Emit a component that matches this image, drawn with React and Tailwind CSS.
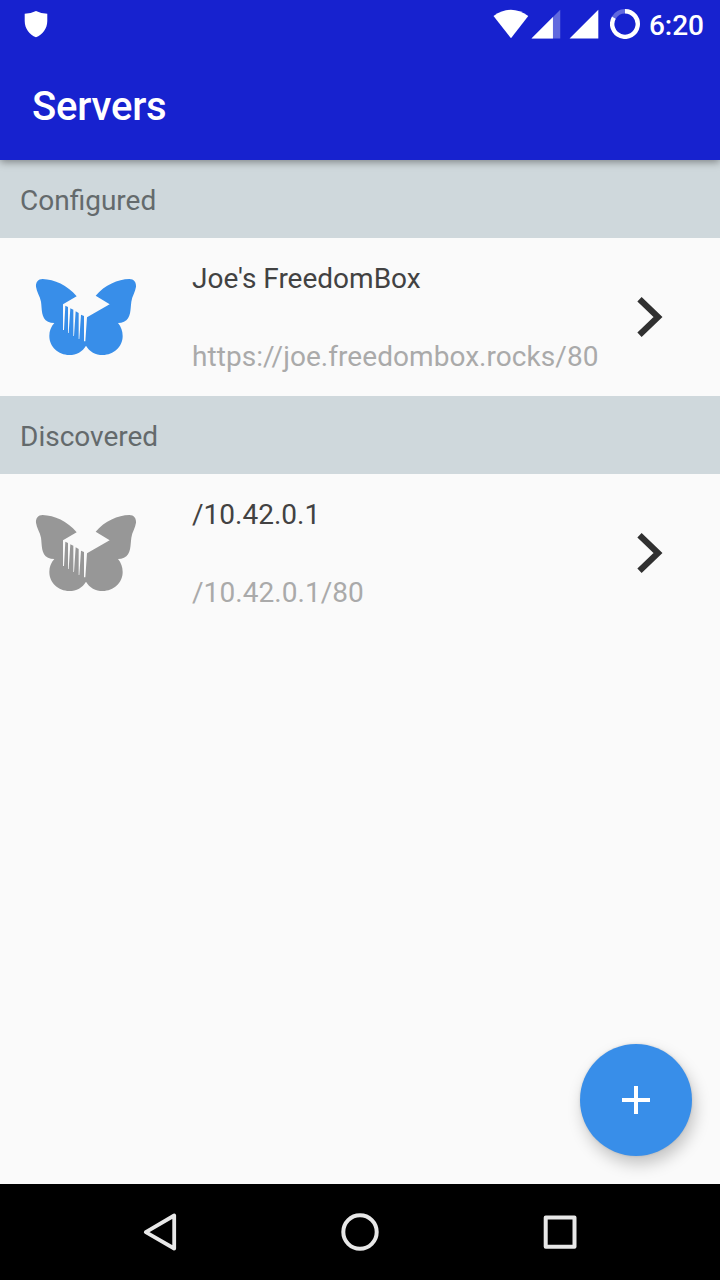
function Butterfly({ className }) {
  return (
    <svg viewBox="0 0 360 288" className={`mb-0.5 h-24 w-[120px] shrink-0 ${className}`}>
      <path
        fill="currentColor"
        d="M50 33C85 34 124 51 152 85L111 109V186L114 186L118 113L126 117V195L128 195L133 121L142 125V204L144 204L149 130L158 135V213L160 213L165 140L174 144V220L178 220L183 148L251 109L209 83C236 51 276 34 310 33C324 33 331 43 330 56C328 72 318 84 316 101C313 122 316 151 294 161Q286 165 276 165C285 176 290 189 290 204C290 236 263 261 230 261C209 261 190 251 180 233C170 251 151 261 130 261C97 261 70 236 70 204C70 189 75 176 85 165Q74 165 66 161C45 151 48 122 45 101C42 84 32 72 30 56C29 43 36 33 50 33Z"
      />
    </svg>
  );
}

function SectionHeader({ children }) {
  return (
    <h2 className="flex h-[78px] items-center bg-[#cfd8dc] pt-1 pl-5 text-[28px] leading-8 text-[#646a6c]">
      {children}
    </h2>
  );
}

function ServerRow({ name, address, iconClass }) {
  return (
    <div className="flex h-[158px] items-center pl-[26px]">
      <Butterfly className={iconClass} />
      <div className="ml-[46px] flex w-[428px] flex-col gap-[46px] pt-0.5 text-[28px] leading-8 whitespace-nowrap">
        <div className="text-[#424242]">{name}</div>
        <div className="tracking-[0.055px] text-[#aaaaaa]">{address}</div>
      </div>
      <svg viewBox="0 0 60 70" className="mb-1 h-[70px] w-[60px] shrink-0">
        <path d="M19.500 19.300L38 37L19.500 54.700" fill="none" stroke="#303030" strokeWidth="6.200" />
      </svg>
    </div>
  );
}

function StatusBar() {
  return (
    <div className="flex h-12 items-center pr-4 pl-6 text-white">
      <svg viewBox="0 0 24 28" className="mb-px h-7 w-6">
        <path fill="currentColor" d="M12 1Q17 3.500 23.300 3.700V11C23.300 18.500 18.500 25 12 27.200C5.500 25 0.700 18.500 0.700 11V3.700Q7 3.500 12 1Z" />
      </svg>
      <svg viewBox="0 0 108 48" className="ml-[444px] h-12 w-[108px]" fill="currentColor">
        <path d="M1.500 16Q18.900 3.500 36.300 16L19 38.200Z" />
        <path opacity=".32" d="M68.300 9.800V38.400H39.500Z" />
        <path d="M61 17V38.400H39.500Z" />
        <path d="M106.400 9.800V38.400H77.600Z" />
      </svg>
      <svg viewBox="0 0 30 30" className="ml-[10px] h-[30px] w-[30px]" fill="none" stroke="currentColor" strokeWidth="4.400">
        <path opacity=".32" d="M3.900 8.600A12.800 12.800 0 0 1 15 2.200" />
        <path d="M15 2.200A12.800 12.800 0 1 1 3.900 8.600" />
      </svg>
      <span className="ml-[9px] pt-1 text-[28px] leading-8 font-medium">6:20</span>
    </div>
  );
}

export default function App() {
  return (
    <div className="flex h-[1280px] w-[720px] flex-col overflow-hidden bg-[#fafafa] font-[Roboto,sans-serif]">
      <header className="relative z-10 h-40 shrink-0 bg-[#1722cf] shadow-[0_2px_8px_rgba(0,0,0,0.4)]">
        <StatusBar />
        <h1 className="flex h-28 items-center pt-1.5 pl-8 text-[40px] leading-[48px] font-medium tracking-[-0.2px] text-white">Servers</h1>
      </header>

      <main className="flex flex-1 flex-col">
        <SectionHeader>Configured</SectionHeader>
        <ServerRow name="Joe's FreedomBox" address="https://joe.freedombox.rocks/80" iconClass="text-[#388ee9]" />
        <SectionHeader>Discovered</SectionHeader>
        <ServerRow name="/10.42.0.1" address="/10.42.0.1/80" iconClass="text-[#979797]" />
        <button
          aria-label="Add server"
          className="mt-auto mr-7 mb-7 flex size-28 items-center justify-center self-end rounded-full bg-[#388ee9] shadow-[3px_8px_16px_rgba(0,0,0,0.22),0_0_3px_rgba(0,0,0,0.12)]"
        >
          <svg viewBox="0 0 28 28" className="size-7">
            <path d="M14 0V28M0 14H28" stroke="white" strokeWidth="4" />
          </svg>
        </button>
      </main>

      <nav className="flex h-24 shrink-0 items-center justify-center gap-[160px] bg-black text-[#e8e8e8]">
        <svg viewBox="0 0 40 40" className="size-10" fill="none" stroke="currentColor" strokeWidth="3.800" strokeLinejoin="round">
          <path d="M34.200 3.500V36.500L5.800 20.200Z" />
        </svg>
        <svg viewBox="0 0 40 40" className="size-10" fill="none" stroke="currentColor" strokeWidth="4">
          <circle cx="20" cy="20" r="16.700" />
        </svg>
        <svg viewBox="0 0 40 40" className="size-10" fill="none" stroke="currentColor" strokeWidth="4" strokeLinejoin="round">
          <rect x="5.700" y="5.400" width="28.800" height="29.400" />
        </svg>
      </nav>
    </div>
  );
}
